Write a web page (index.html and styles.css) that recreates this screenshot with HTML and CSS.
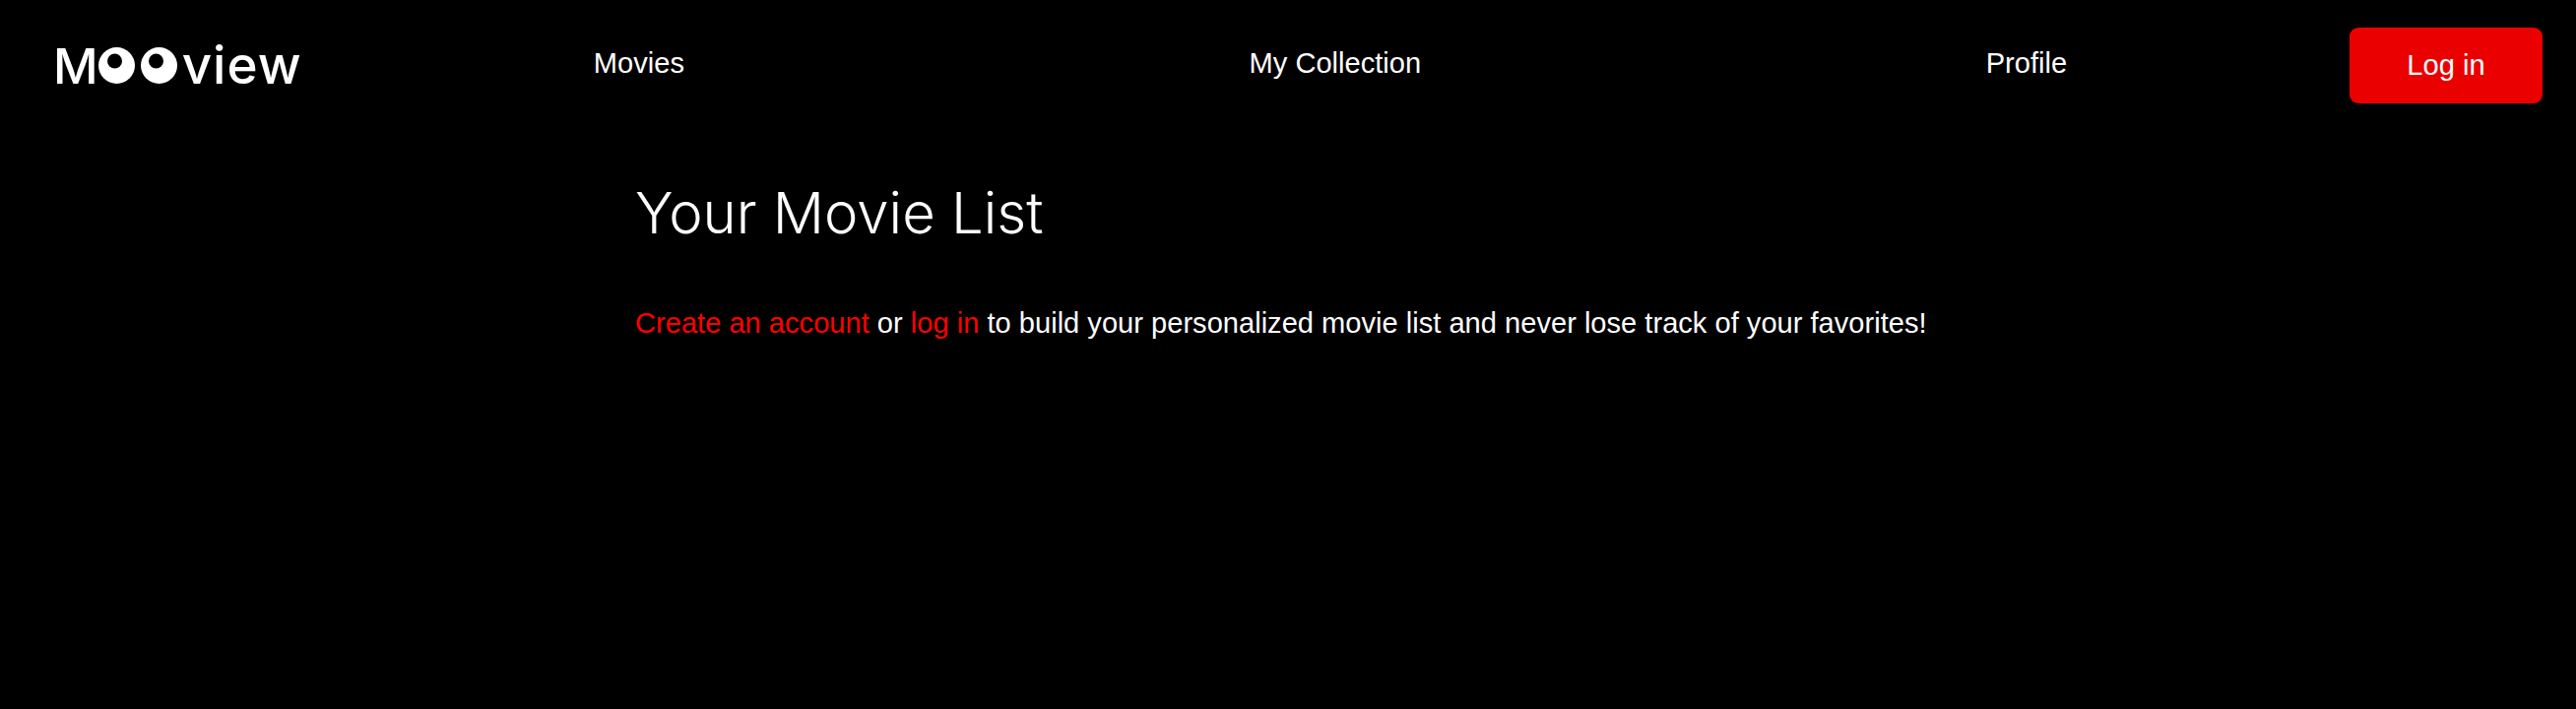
FILE: index.html
```html
<!DOCTYPE html>
<html lang="en">
<head>
<meta charset="utf-8">
<title>Mooview</title>
<link rel="stylesheet" href="styles.css">
</head>
<body>
<header class="header">
  <a class="logo" href="#">
    <span class="logo-text">M</span>
    <svg class="logo-eyes" width="80" height="37" viewBox="0 0 80 37" aria-hidden="true">
      <circle cx="18.5" cy="18.5" r="18.5" fill="#fff"/>
      <circle cx="16.5" cy="14" r="7.5" fill="#000"/>
      <circle cx="61.5" cy="18.5" r="18.5" fill="#fff"/>
      <circle cx="58.5" cy="14" r="7.5" fill="#000"/>
    </svg>
    <span class="logo-text logo-tail">view</span>
  </a>
  <nav class="nav">
    <a href="#">Movies</a>
    <a href="#">My Collection</a>
    <a href="#">Profile</a>
  </nav>
  <button class="login" type="button">Log in</button>
</header>
<main class="content">
  <h1 class="title">Your Movie List</h1>
  <p class="message"><a href="#">Create an account</a> or <a href="#">log in</a> to build your personalized movie list and never lose track of your favorites!</p>
</main>
</body>
</html>
```
FILE: styles.css
```css
* { box-sizing: border-box; }
html, body { margin: 0; background: #000; color: #fff; }
body { font-family: "Liberation Sans", Arial, sans-serif; height: 720px; overflow: hidden; }
a { color: inherit; text-decoration: none; }
.header { display: flex; align-items: center; padding: 28px 34px 0 54px; }
.logo { display: flex; align-items: center; width: 262px; height: 77px; }
.logo-text { font-family: "Inter", sans-serif; font-size: 50px; font-weight: 500; line-height: 1; }
.logo-tail { margin-left: 5px; font-size: 53px; letter-spacing: 1px; }
.logo-eyes { flex: none; }
.nav { flex: 1; display: flex; justify-content: space-around; font-size: 29.1px; line-height: 36px; position: relative; top: -3px; }
.login { width: 196px; height: 77px; border: 0; border-radius: 9px; background: #eb0000; color: #fff; font: 29.1px "Liberation Sans", Arial, sans-serif; }
.content { padding: 75px 0 0 645px; }
.title { margin: 0; font-family: "Inter", sans-serif; font-size: 58px; font-weight: 300; line-height: 72px; }
.message { margin: 58px 0 0; font-size: 29.1px; line-height: 36px; }
.message a { color: #f00; }
```
